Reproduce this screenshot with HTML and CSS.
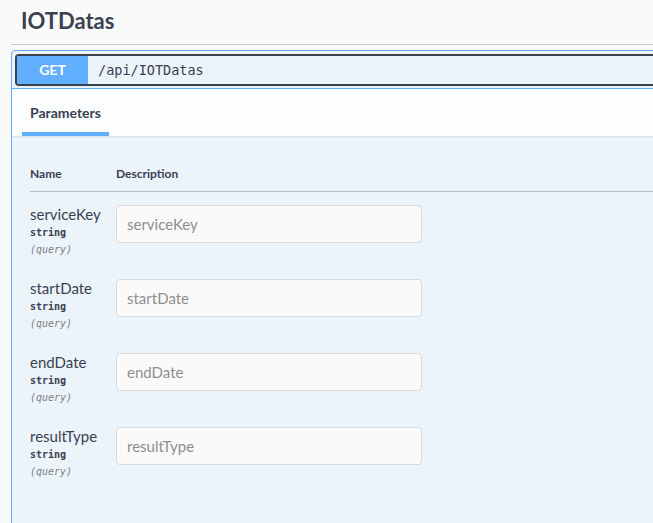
FILE: index.html
```html
<!DOCTYPE html>
<html>
<head>
<meta charset="utf-8">
<link rel="stylesheet" href="styles.css">
</head>
<body>
<div class="page">
  <section class="tag">
    <h3 class="tag-title">IOTDatas</h3>
  </section>
  <div class="opblock">
    <div class="summary">
      <div class="summary-control">
        <span class="method">GET</span>
        <span class="path">/api/IOTDatas</span>
      </div>
    </div>
    <div class="body">
      <div class="tab-header">
        <div class="tab">Parameters</div>
      </div>
      <div class="params">
        <div class="params-head">
          <div class="col-name">Name</div>
          <div class="col-desc">Description</div>
        </div>
        <div class="row">
          <div class="col-name">
            <div class="p-name">serviceKey</div>
            <div class="p-type">string</div>
            <div class="p-in">(query)</div>
          </div>
          <div class="col-desc"><input class="field" type="text" placeholder="serviceKey"></div>
        </div>
        <div class="row">
          <div class="col-name">
            <div class="p-name">startDate</div>
            <div class="p-type">string</div>
            <div class="p-in">(query)</div>
          </div>
          <div class="col-desc"><input class="field" type="text" placeholder="startDate"></div>
        </div>
        <div class="row">
          <div class="col-name">
            <div class="p-name">endDate</div>
            <div class="p-type">string</div>
            <div class="p-in">(query)</div>
          </div>
          <div class="col-desc"><input class="field" type="text" placeholder="endDate"></div>
        </div>
        <div class="row">
          <div class="col-name">
            <div class="p-name">resultType</div>
            <div class="p-type">string</div>
            <div class="p-in">(query)</div>
          </div>
          <div class="col-desc"><input class="field" type="text" placeholder="resultType"></div>
        </div>
      </div>
    </div>
  </div>
</div>
</body>
</html>
```
FILE: styles.css
```css
html, body {
  margin: 0;
  padding: 0;
  background: #fafafa;
  overflow: hidden;
}
body {
  font-family: Lato, "Noto Sans", sans-serif;
  color: #3b4151;
}
.page {
  width: 800px;
  height: 523px;
  padding-left: 11px;
}
.tag {
  border-bottom: 1px solid #c8c9cc;
}
.tag-title {
  margin: 0;
  height: 44px;
  box-sizing: border-box;
  padding: 6px 0 0 10px;
  font-size: 22px;
  line-height: 29px;
  font-weight: 700;
  color: #3b4151;
}
.opblock {
  margin-top: 5px;
  border: 1px solid #61affe;
  border-radius: 4px 0 0 0;
  background: #ebf3fb;
  height: 600px;
}
.summary {
  padding: 3px 0 2px 3px;
  border-bottom: 1px solid #61affe;
}
.summary-control {
  display: flex;
  align-items: center;
  border: 2px solid #3b4151;
  border-radius: 4px 0 0 4px;
  height: 28px;
}
.method {
  width: 71px;
  height: 28px;
  background: #61affe;
  border-radius: 3px 0 0 3px;
  color: #fff;
  font-weight: 700;
  font-size: 14px;
  line-height: 28px;
  text-align: center;
}
.path {
  margin-left: 10px;
  font-family: "DejaVu Sans Mono", monospace;
  font-size: 13.5px;
  color: #3b4151;
}
.tab-header {
  height: 47px;
  background: #fcfdff;
  box-shadow: 0 1px 2px rgba(0,0,0,.1);
  display: flex;
  padding-left: 10px;
}
.tab {
  display: flex;
  align-items: center;
  padding: 4px 8px 0 8px;
  font-size: 14px;
  font-weight: 700;
  border-bottom: 4px solid #61affe;
  box-sizing: border-box;
}
.params {
  padding: 0 0 0 18px;
}
.params-head {
  display: flex;
  padding-top: 28px;
  height: 56px;
  box-sizing: border-box;
  font-size: 12px;
  font-weight: 700;
  border-bottom: 1px solid #b8bec8;
  line-height: 20px;
}
.col-name {
  width: 86px;
  flex: none;
}
.row {
  display: flex;
  height: 74px;
  box-sizing: border-box;
  padding-top: 13px;
}
.p-name {
  font-size: 15px;
  line-height: 18px;
  margin-top: 0;
}
.p-type {
  font-family: "DejaVu Sans Mono", monospace;
  font-weight: 700;
  font-size: 10px;
  line-height: 17px;
  margin-top: 1px;
}
.p-in {
  font-family: "DejaVu Sans Mono", monospace;
  font-style: italic;
  font-size: 10px;
  line-height: 17px;
  color: #808080;
}
.field {
  display: block;
  width: 306px;
  height: 38px;
  box-sizing: border-box;
  margin: 0;
  padding: 0 10px;
  border: 1px solid #d9d9d9;
  border-radius: 4px;
  background: #fafafa;
  font-family: Lato, "Noto Sans", sans-serif;
  font-size: 15px;
  color: #3b4151;
  outline: none;
}
.field::placeholder {
  color: #8e8e8e;
}
```
